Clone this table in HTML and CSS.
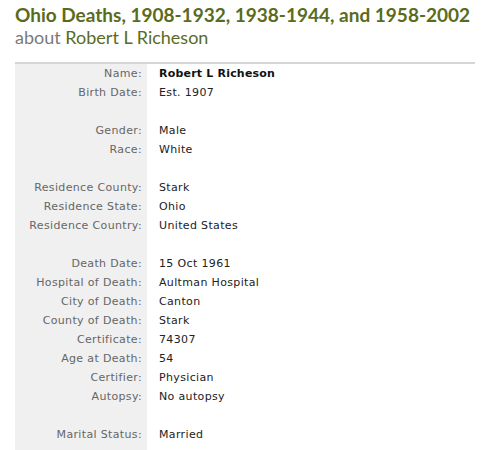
FILE: index.html
```html
<!DOCTYPE html>
<html>
<head>
<meta charset="utf-8">
<link rel="stylesheet" href="styles.css">
</head>
<body>
<div class="page">
  <h1 class="title">Ohio Deaths, 1908-1932, 1938-1944, and 1958-2002</h1>
  <div class="subtitle">about <span class="person">Robert L Richeson</span></div>
  <table class="record">
    <tr><th>Name:</th><td class="strong">Robert L Richeson</td></tr>
    <tr><th>Birth Date:</th><td>Est. 1907</td></tr>
    <tr class="gap"><th></th><td></td></tr>
    <tr><th>Gender:</th><td>Male</td></tr>
    <tr><th>Race:</th><td>White</td></tr>
    <tr class="gap"><th></th><td></td></tr>
    <tr><th>Residence County:</th><td>Stark</td></tr>
    <tr><th>Residence State:</th><td>Ohio</td></tr>
    <tr><th>Residence Country:</th><td>United States</td></tr>
    <tr class="gap"><th></th><td></td></tr>
    <tr><th>Death Date:</th><td>15 Oct 1961</td></tr>
    <tr><th>Hospital of Death:</th><td>Aultman Hospital</td></tr>
    <tr><th>City of Death:</th><td>Canton</td></tr>
    <tr><th>County of Death:</th><td>Stark</td></tr>
    <tr><th>Certificate:</th><td>74307</td></tr>
    <tr><th>Age at Death:</th><td>54</td></tr>
    <tr><th>Certifier:</th><td>Physician</td></tr>
    <tr><th>Autopsy:</th><td>No autopsy</td></tr>
    <tr class="gap"><th></th><td></td></tr>
    <tr><th>Marital Status:</th><td>Married</td></tr>
    <tr class="gap"><th></th><td></td></tr>
  </table>
</div>
</body>
</html>
```

FILE: styles.css
```css
html, body {
  margin: 0;
  padding: 0;
  background: #fff;
}
.page {
  padding: 4px 8px 0 15px;
}
.title {
  margin: 0;
  font-family: "Lato", sans-serif;
  font-weight: bold;
  font-size: 19px;
  line-height: 22px;
  color: #5b6b1c;
  white-space: nowrap;
}
.subtitle {
  font-family: "Lato", sans-serif;
  font-size: 18px;
  line-height: 22px;
  color: #7a7a7a;
}
.person {
  color: #5b6b1c;
}
.record {
  margin-top: 14px;
  width: 460px;
  border-collapse: collapse;
  border-top: 2px solid #d6d6d6;
  font-family: "DejaVu Sans", Verdana, sans-serif;
  font-size: 11px;
  letter-spacing: 0.35px;
}
.record th {
  width: 127px;
  background: #f0f0f0;
  color: #666;
  font-weight: normal;
  text-align: right;
  padding: 0 5px 0 0;
  height: 19px;
  white-space: nowrap;
}
.record td {
  padding: 0 0 0 12px;
  color: #222;
  height: 19px;
}
.record td.strong {
  font-weight: bold;
  color: #111;
  letter-spacing: 0.2px;
}
```
